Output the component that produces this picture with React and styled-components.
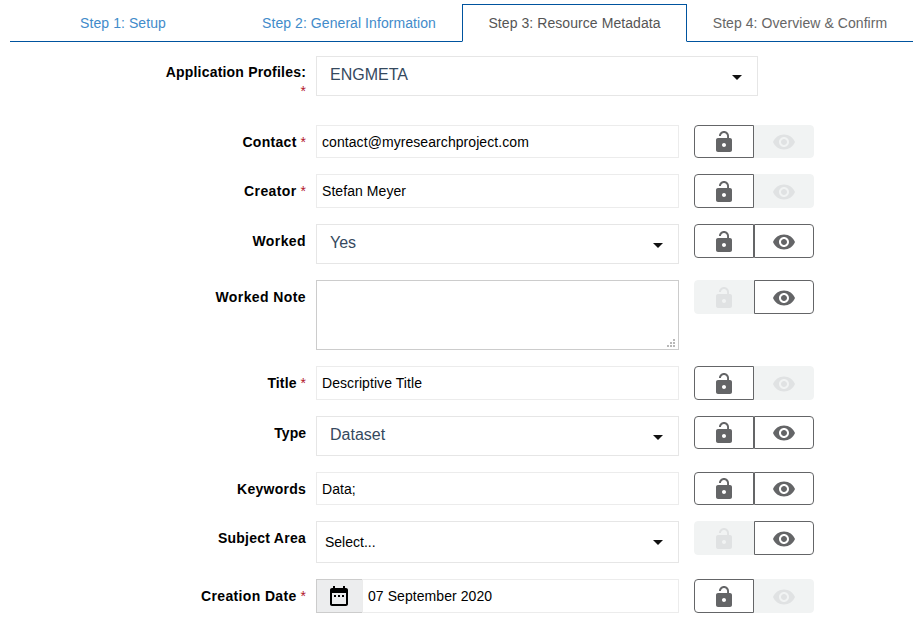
import React from 'react';
import styled, { createGlobalStyle, css } from 'styled-components';

const GlobalStyle = createGlobalStyle`
  *, *::before, *::after { box-sizing: border-box; }
  html, body { margin: 0; background: #fff; overflow: hidden; }
  body { font-family: "Liberation Sans", Arial, sans-serif; font-size: 14px; line-height: 20px; color: #000; }
`;

const Page = styled.main`
  height: 619px;
  padding: 4px 1px 0 10px;
  overflow: hidden;
`;

const Tabs = styled.nav`
  display: grid;
  grid-template-columns: 226px 226px 225px 226px;
  height: 38px;
`;

const Tab = styled.a`
  display: flex;
  justify-content: center;
  padding-top: ${(p) => (p.$active ? 8 : 9)}px;
  color: ${(p) => (p.$muted ? '#666' : '#428bca')};
  border-bottom: 1px solid #00549f;
  white-space: nowrap;
  letter-spacing: 0.07px;
  ${(p) => p.$active && css`
    color: #555;
    border: 1px solid #00549f;
    border-bottom-color: transparent;
  `}
`;

const Form = styled.form`
  display: flex;
  flex-direction: column;
  gap: 16px;
  padding-top: 14px;
`;

const Row = styled.div`
  display: grid;
  grid-template-columns: 296px ${(p) => (p.$wide ? '442px' : '363px 120px')};
  align-items: start;
  height: ${(p) => p.$height}px;
  margin-bottom: ${(p) => (p.$wide ? 13 : 0)}px;
  & > :nth-child(2) { margin-left: 10px; margin-right: -10px; }
  & > :nth-child(3) { margin-left: 25px; margin-right: -25px; }
`;

const Label = styled.label`
  padding-top: ${(p) => (p.$top ?? 8)}px;
  text-align: right;
  font-weight: 700;
  line-height: 19px;
  letter-spacing: ${(p) => p.$tracking ?? 0.15}px;
`;

const Required = styled.span`
  color: #b2182b;
  font-weight: 400;
  letter-spacing: 0;
`;

const TextField = styled.div`
  display: flex;
  align-items: center;
  height: ${(p) => p.$height}px;
  padding: 0 5px;
  border: 1px solid #ececec;
  letter-spacing: 0.07px;
`;

const SelectBox = styled.div`
  display: flex;
  align-items: flex-start;
  justify-content: space-between;
  height: ${(p) => p.$height}px;
  padding: ${(p) => (p.$plain ? '10px 15px 0 8px' : '8px 15px 0 13px')};
  border: 1px solid #e6e6e6;
  font-size: ${(p) => (p.$plain ? 14 : 16)}px;
  color: ${(p) => (p.$plain ? '#000' : '#35495e')};
`;

const Caret = styled.i`
  margin-top: ${(p) => (p.$plain ? 8 : 10)}px;
  border: 5px solid transparent;
  border-top-color: #111;
  border-bottom-width: 0;
`;

const NoteArea = styled.div`
  display: flex;
  align-items: flex-end;
  justify-content: flex-end;
  height: 70px;
  padding: 0 3px 2px 0;
  border: 1px solid #ccc;
`;

const DateField = styled.div`
  display: grid;
  grid-template-columns: 46px 1fr;
`;

const DateAddon = styled.span`
  display: flex;
  align-items: center;
  justify-content: center;
  height: 34px;
  padding-right: 1px;
  background: #ecedee;
  border: 1px solid #ccc;
  border-right: 0;
`;

const ButtonGroup = styled.div`
  display: grid;
  grid-template-columns: 60px 60px;
`;

const IconButton = styled.button`
  display: flex;
  justify-content: center;
  align-items: flex-start;
  height: ${(p) => p.$height}px;
  padding: ${(p) => p.$height - 29}px 0 0;
  border: 1px solid ${(p) => (p.disabled ? '#f1f3f3' : '#646567')};
  border-radius: ${(p) => (p.$end ? '0 4px 4px 0' : '4px 0 0 4px')};
  background: ${(p) => (p.disabled ? '#f1f3f3' : '#fff')};
  color: ${(p) => (p.disabled ? '#e0e2e3' : '#646567')};
`;

const Svg = styled.svg`
  display: block;
  flex: none;
  width: 24px;
  height: 24px;
  fill: currentColor;
`;

const Grip = styled.svg`
  width: 8px;
  height: 8px;
  fill: #b8b8b8;
`;

const LockIcon = () => (
  <Svg viewBox="0 0 24 24">
    <path d="M12 17c1.1 0 2-.9 2-2s-.9-2-2-2-2 .9-2 2 .9 2 2 2zm6-9h-1V6c0-2.76-2.24-5-5-5S7 3.24 7 6h1.9c0-1.71 1.39-3.1 3.1-3.1s3.1 1.39 3.1 3.1v2H6c-1.1 0-2 .9-2 2v10c0 1.1.9 2 2 2h12c1.1 0 2-.9 2-2V10c0-1.1-.9-2-2-2z" fillRule="evenodd" />
  </Svg>
);

const EyeIcon = () => (
  <Svg viewBox="0 0 24 24">
    <path d="M12 4.5C7 4.5 2.73 7.61 1 12c1.73 4.39 6 7.5 11 7.5s9.27-3.11 11-7.5c-1.73-4.39-6-7.5-11-7.5zM12 17c-2.76 0-5-2.24-5-5s2.24-5 5-5 5 2.24 5 5-2.24 5-5 5zm0-8c-1.66 0-3 1.34-3 3s1.34 3 3 3 3-1.34 3-3-1.34-3-3-3z" />
  </Svg>
);

const CalendarIcon = () => (
  <Svg viewBox="0 0 24 24">
    <path d="M9 11H7v2h2v-2zm4 0h-2v2h2v-2zm4 0h-2v2h2v-2zm2-7h-1V2h-2v2H8V2H6v2H5c-1.11 0-1.99.9-1.99 2L3 20c0 1.1.89 2 2 2h14c1.1 0 2-.9 2-2V6c0-1.1-.9-2-2-2zm0 16H5V9h14v11z" />
  </Svg>
);

const ResizeGrip = () => (
  <Grip viewBox="0 0 8 8">
    <path d="M6 0h2v2H6zM3 3h2v2H3zM6 3h2v2H6zM0 6h2v2H0zM3 6h2v2H3zM6 6h2v2H6z" />
  </Grip>
);

const fields = [
  { label: 'Contact', tracking: 0.3, required: true, kind: 'text', value: 'contact@myresearchproject.com', height: 33, button: 33, lock: true },
  { label: 'Creator', tracking: 0.4, required: true, kind: 'text', value: 'Stefan Meyer', height: 34, button: 34, lock: true },
  { label: 'Worked', tracking: 0.4, kind: 'select', value: 'Yes', height: 40, button: 34, lock: true, eye: true },
  { label: 'Worked Note', tracking: 0.4, kind: 'note', height: 70, button: 34, eye: true },
  { label: 'Title', required: true, kind: 'text', value: 'Descriptive Title', height: 34, button: 34, lock: true },
  { label: 'Type', tracking: 0, kind: 'select', value: 'Dataset', height: 40, button: 33, lock: true, eye: true },
  { label: 'Keywords', tracking: 0.25, kind: 'text', value: 'Data;', height: 33, button: 33, lock: true, eye: true },
  { label: 'Subject Area', tracking: 0.25, kind: 'plainSelect', value: 'Select...', height: 42, button: 34, eye: true },
  { label: 'Creation Date', tracking: 0.35, required: true, kind: 'date', value: '07 September 2020', height: 34, button: 34, lock: true },
];

function Control({ kind, value, height }) {
  if (kind === 'note') return <NoteArea><ResizeGrip /></NoteArea>;
  if (kind === 'date') {
    return (
      <DateField>
        <DateAddon><CalendarIcon /></DateAddon>
        <TextField $height={height}>{value}</TextField>
      </DateField>
    );
  }
  if (kind === 'text') return <TextField $height={height}>{value}</TextField>;
  const plain = kind === 'plainSelect';
  return (
    <SelectBox $height={height} $plain={plain}>
      <span>{value}</span>
      <Caret $plain={plain} />
    </SelectBox>
  );
}

export default function App() {
  return (
    <Page>
      <GlobalStyle />
      <Tabs>
        <Tab>Step 1: Setup</Tab>
        <Tab>Step 2: General Information</Tab>
        <Tab $active>Step 3: Resource Metadata</Tab>
        <Tab $muted>Step 4: Overview &amp; Confirm</Tab>
      </Tabs>
      <Form>
        <Row $wide $height={40}>
          <Label $top={7} $tracking={0.2}>Application Profiles:<br /><Required>*</Required></Label>
          <Control kind="select" value="ENGMETA" height={40} />
        </Row>
        {fields.map((f) => (
          <Row key={f.label} $height={f.height}>
            <Label $tracking={f.tracking}>{f.label}{f.required && <Required> *</Required>}</Label>
            <Control kind={f.kind} value={f.value} height={f.height} />
            <ButtonGroup>
              <IconButton type="button" $height={f.button} disabled={!f.lock}><LockIcon /></IconButton>
              <IconButton type="button" $height={f.button} $end disabled={!f.eye}><EyeIcon /></IconButton>
            </ButtonGroup>
          </Row>
        ))}
      </Form>
    </Page>
  );
}
